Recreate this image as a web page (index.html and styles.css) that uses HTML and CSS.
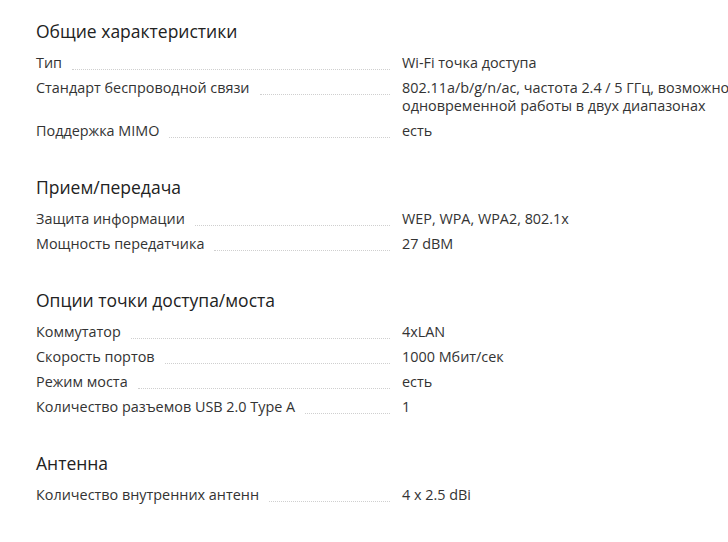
FILE: index.html
```html
<!DOCTYPE html>
<html lang="ru">
<head>
<meta charset="utf-8">
<link rel="stylesheet" href="styles.css">
</head>
<body>
<div class="specs">
  <section class="group">
    <h2 class="group-title">Общие характеристики</h2>
    <div class="row"><div class="key"><span class="key-text">Тип</span><span class="dots"></span></div><div class="val">Wi-Fi точка доступа</div></div>
    <div class="row"><div class="key"><span class="key-text">Стандарт беспроводной связи</span><span class="dots"></span></div><div class="val">802.11a/b/g/n/ac, частота 2.4 / 5 ГГц, возможность одновременной работы в двух диапазонах</div></div>
    <div class="row"><div class="key"><span class="key-text">Поддержка MIMO</span><span class="dots"></span></div><div class="val">есть</div></div>
  </section>
  <section class="group">
    <h2 class="group-title">Прием/передача</h2>
    <div class="row"><div class="key"><span class="key-text">Защита информации</span><span class="dots"></span></div><div class="val">WEP, WPA, WPA2, 802.1x</div></div>
    <div class="row"><div class="key"><span class="key-text">Мощность передатчика</span><span class="dots"></span></div><div class="val">27 dBM</div></div>
  </section>
  <section class="group">
    <h2 class="group-title">Опции точки доступа/моста</h2>
    <div class="row"><div class="key"><span class="key-text">Коммутатор</span><span class="dots"></span></div><div class="val">4xLAN</div></div>
    <div class="row"><div class="key"><span class="key-text">Скорость портов</span><span class="dots"></span></div><div class="val">1000 Мбит/сек</div></div>
    <div class="row"><div class="key"><span class="key-text">Режим моста</span><span class="dots"></span></div><div class="val">есть</div></div>
    <div class="row"><div class="key"><span class="key-text">Количество разъемов USB 2.0 Type A</span><span class="dots"></span></div><div class="val">1</div></div>
  </section>
  <section class="group">
    <h2 class="group-title">Антенна</h2>
    <div class="row"><div class="key"><span class="key-text">Количество внутренних антенн</span><span class="dots"></span></div><div class="val">4 x 2.5 dBi</div></div>
  </section>
</div>
</body>
</html>
```
FILE: styles.css
```css
html, body {
  margin: 0;
  padding: 0;
  background: #fff;
  overflow: hidden;
}
body {
  font-family: "Open Sans", "Noto Sans", sans-serif;
  color: #333;
  width: 728px;
  height: 542px;
}
.specs {
  padding: 19px 0 0 36px;
  width: 900px;
}
.group {
  padding-bottom: 28px;
}
.group-title {
  margin: 0 0 11px;
  font-size: 17.5px;
  line-height: 24px;
  font-weight: 400;
  color: #222;
}
.row {
  display: grid;
  grid-template-columns: 366px 430px;
  margin-bottom: 7px;
  font-size: 14.4px;
  line-height: 18px;
}
.key {
  display: flex;
  align-items: flex-start;
  padding-right: 12px;
}
.key-text {
  flex: none;
}
.dots {
  flex: 1;
  height: 15px;
  margin-left: 10px;
  border-bottom: 1px dotted #cfcfcf;
}
.val {
  color: #333;
}
```
